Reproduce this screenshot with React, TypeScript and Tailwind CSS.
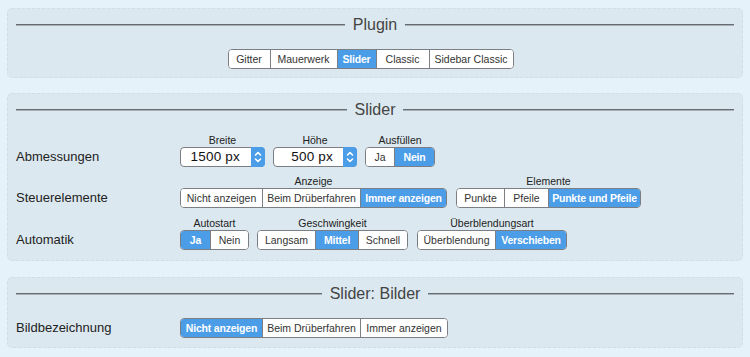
import React from "react";

type Btn = { label: string; w: string; active?: boolean };

function Group({ items }: { items: Btn[] }) {
  return (
    <div className="flex h-[20px] rounded-[4px] border border-[#7b7f83] bg-white overflow-hidden">
      {items.map((b, i) => (
        <div
          key={b.label}
          className={
            "flex items-center justify-center text-[10.5px] leading-none whitespace-nowrap " +
            b.w +
            (i > 0 ? " border-l border-[#7b7f83]" : "") +
            (b.active ? " bg-[#4b9de8] text-white font-semibold tracking-[-0.2px]" : " bg-white text-[#333]")
          }
        >
          {b.label}
        </div>
      ))}
    </div>
  );
}

function Labeled({ label, children }: { label: string; children: React.ReactNode }) {
  return (
    <div className="flex flex-col items-center">
      <div className="h-[12px] text-[10.5px] leading-[11px] text-[#222]">{label}</div>
      {children}
    </div>
  );
}

function NumberInput({ value, w, pr }: { value: string; w: string; pr: string }) {
  return (
    <div className={"flex h-[20px] rounded-[4px] border border-[#7b7f83] bg-white " + w}>
      <div className={"flex-1 flex items-center justify-end text-[13.5px] leading-none text-[#111] tracking-[0.2px] " + pr}>
        {value}
      </div>
      <div className="w-[14px] -my-px -mr-px rounded-r-[4px] bg-[#4b9de8] flex items-center justify-center">
        <svg width="10" height="14" viewBox="0 0 10 14" fill="none" stroke="white" strokeWidth="1.6" strokeLinecap="round" strokeLinejoin="round">
          <path d="M2.5 5 L5 2.5 L7.5 5" />
          <path d="M2.5 9 L5 11.5 L7.5 9" />
        </svg>
      </div>
    </div>
  );
}

function Title({ text }: { text: string }) {
  return (
    <div className="flex items-center h-[18px] gap-[8px]">
      <div className="flex-1 h-[2px] border-t border-[#656c72] bg-[#a7b0b6]" />
      <div className="text-[16px] leading-[18px] text-[#444]">{text}</div>
      <div className="flex-1 h-[2px] border-t border-[#656c72] bg-[#a7b0b6]" />
    </div>
  );
}

function RowLabel({ text }: { text: string }) {
  return <div className="w-[164px] h-[20px] flex items-center text-[13px] text-[#222]">{text}</div>;
}

const panel = "rounded-[5px] border border-dashed border-[#d2dde6] bg-[#dce8ef] px-[8px] pt-[7px]";

export default function App() {
  return (
    <div
      className="w-[750px] h-[357px] bg-[#e5f2fa] px-[7px] pt-[8px] overflow-hidden"
      style={{ fontFamily: '"Liberation Sans", Arial, sans-serif' }}
    >
      {/* Plugin */}
      <div className={panel + " pb-[8px]"}>
        <Title text="Plugin" />
        <div className="mt-[15px] flex justify-center pr-[9px]">
          <Group
            items={[
              { label: "Gitter", w: "w-[41px]" },
              { label: "Mauerwerk", w: "w-[67px]" },
              { label: "Slider", w: "w-[39px]", active: true },
              { label: "Classic", w: "w-[53px]" },
              { label: "Sidebar Classic", w: "w-[84px]" },
            ]}
          />
        </div>
      </div>

      {/* Slider */}
      <div className={"mt-[15px] " + panel + " pb-[10px]"}>
        <Title text="Slider" />
        <div className="mt-[16px] flex items-end">
          <RowLabel text="Abmessungen" />
          <div className="flex items-end gap-[8px]">
            <Labeled label="Breite">
              <NumberInput value="1500 px" w="w-[85px]" pr="pr-[11px]" />
            </Labeled>
            <Labeled label="Höhe">
              <NumberInput value="500 px" w="w-[84px]" pr="pr-[10px]" />
            </Labeled>
            <Labeled label="Ausfüllen">
              <Group
                items={[
                  { label: "Ja", w: "w-[28px]" },
                  { label: "Nein", w: "w-[40px]", active: true },
                ]}
              />
            </Labeled>
          </div>
        </div>
        <div className="mt-[9px] flex items-end">
          <RowLabel text="Steuerelemente" />
          <div className="flex items-end gap-[9px]">
            <Labeled label="Anzeige">
              <Group
                items={[
                  { label: "Nicht anzeigen", w: "w-[81px]" },
                  { label: "Beim Drüberfahren", w: "w-[98px]" },
                  { label: "Immer anzeigen", w: "w-[86px]", active: true },
                ]}
              />
            </Labeled>
            <Labeled label="Elemente">
              <Group
                items={[
                  { label: "Punkte", w: "w-[47px]" },
                  { label: "Pfeile", w: "w-[44px]" },
                  { label: "Punkte und Pfeile", w: "w-[92px]", active: true },
                ]}
              />
            </Labeled>
          </div>
        </div>
        <div className="mt-[10px] flex items-end">
          <RowLabel text="Automatik" />
          <div className="flex items-end gap-[8px]">
            <Labeled label="Autostart">
              <Group
                items={[
                  { label: "Ja", w: "w-[29px]", active: true },
                  { label: "Nein", w: "w-[38px]" },
                ]}
              />
            </Labeled>
            <Labeled label="Geschwingkeit">
              <Group
                items={[
                  { label: "Langsam", w: "w-[57px]" },
                  { label: "Mittel", w: "w-[43px]", active: true },
                  { label: "Schnell", w: "w-[49px]" },
                ]}
              />
            </Labeled>
            <div className="ml-[1px]">
              <Labeled label="Überblendungsart">
                <Group
                  items={[
                    { label: "Überblendung", w: "w-[77px]" },
                    { label: "Verschieben", w: "w-[71px]", active: true },
                  ]}
                />
              </Labeled>
            </div>
          </div>
        </div>
      </div>

      {/* Slider: Bilder */}
      <div className={"mt-[16px] " + panel + " pb-[9px]"}>
        <Title text="Slider: Bilder" />
        <div className="mt-[15px] flex items-end">
          <RowLabel text="Bildbezeichnung" />
          <Group
            items={[
              { label: "Nicht anzeigen", w: "w-[81px]", active: true },
              { label: "Beim Drüberfahren", w: "w-[98px]" },
              { label: "Immer anzeigen", w: "w-[87px]" },
            ]}
          />
        </div>
      </div>
    </div>
  );
}
